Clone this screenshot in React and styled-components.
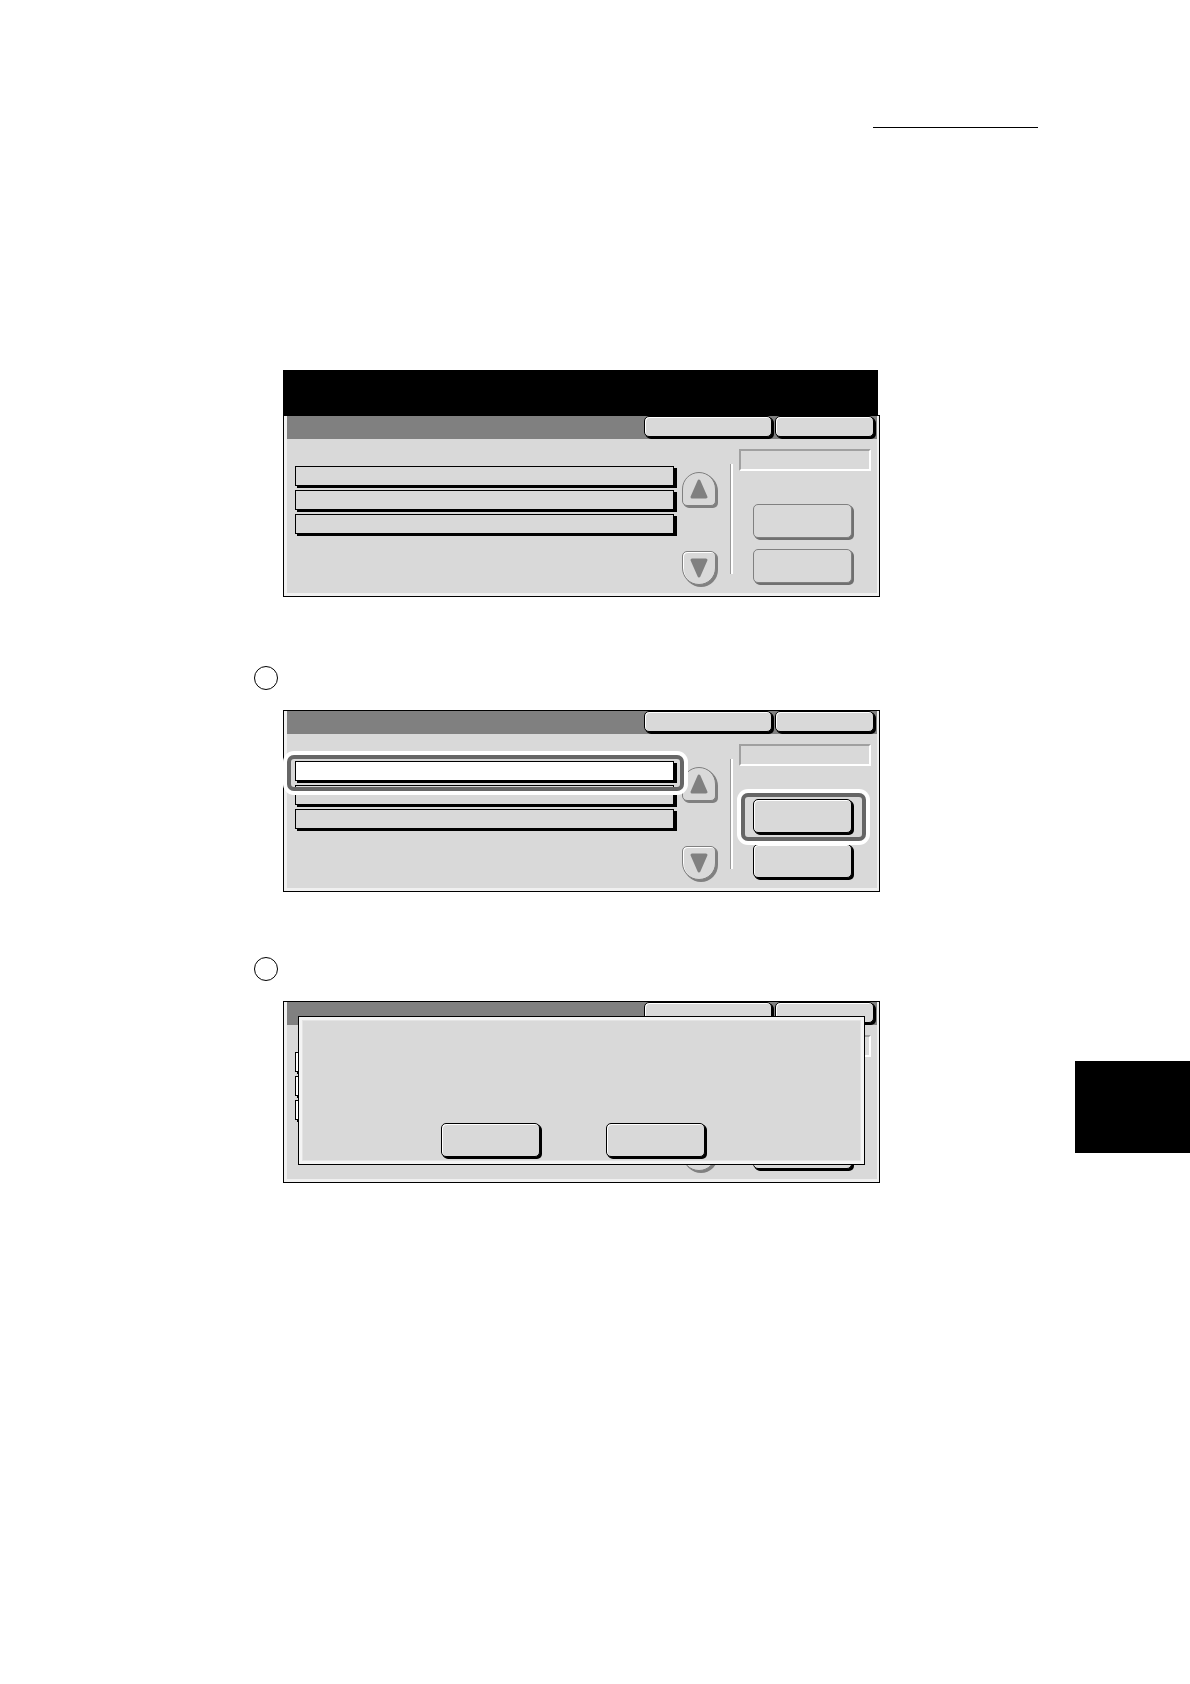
import React from "react";
import styled, { createGlobalStyle } from "styled-components";

const GlobalStyle = createGlobalStyle`
  * {
    box-sizing: border-box;
  }
  body {
    margin: 0;
    background-color: white;
    font-family: "Liberation Sans", sans-serif;
  }
`;

const Page = styled.div`
  display: flex;
  min-height: 100vh;
`;
const Main = styled.main`
  flex: 1;
  min-width: 0;
  padding: 127px 37px 0 254px;
`;
const Side = styled.aside`
  width: 115px;
  padding-top: 1061px;
`;
const ThumbIndex = styled.div`
  height: 92px;
  background-color: black;
`;
const HeaderRule = styled.hr`
  width: 165px;
  height: 1px;
  margin: 0 0 242px auto;
  border: none;
  background-color: black;
`;
const StepNumber = styled.div`
  width: 24px;
  height: 24px;
  margin-top: ${(props) => props.$top}px;
  margin-bottom: 20px;
  border: 1px solid black;
  border-radius: 50%;
`;
const Figure = styled.section`
  margin: 0 158px 0 29px;
`;
const MessageArea = styled.div`
  height: 45px;
  margin-right: 2px;
  background-color: black;
`;

const Screen = styled.div`
  position: relative;
  padding: 0 2px 3px 3px;
  border: 1px solid black;
  background-color: #f0f0f0;
`;
const TitleBar = styled.div`
  display: flex;
  justify-content: flex-end;
  gap: 3px;
  height: 23px;
  padding-right: 3px;
  background-color: #808080;
`;
const Body = styled.div`
  display: flex;
  align-items: flex-start;
  min-height: 154px;
  padding: 0 6px 0 8px;
  background-color: #d9d9d9;
`;

const Button = styled.button`
  display: block;
  padding: 0;
  border: 1px solid black;
  border-radius: 5px;
  background-color: #d9d9d9;
  box-shadow: inset 1px 1px 0 white, 1px 1px 0 black, 2px 2px 0 black;
  &:disabled {
    border-color: #808080;
    box-shadow: 1px 1px 0 #707070, 2px 2px 0 #707070;
  }
`;
const TabButton = styled(Button)`
  width: ${(props) => (props.$wide ? 128 : 99)}px;
  height: 21px;
`;
const ActionButton = styled(Button)`
  width: 99px;
  height: 34px;
`;
const ArrowButton = styled(Button)`
  display: flex;
  align-items: center;
  justify-content: center;
  width: 34px;
  height: 34px;
  border-radius: ${(props) => (props.$up ? "17px 17px 5px 5px" : "5px 5px 17px 17px")};
  &:disabled {
    box-shadow: ${(props) => (props.$up ? "" : "inset 1px 1px 0 white,")} 1px 1px 0 #808080,
      2px 2px 0 #808080;
  }
`;

const List = styled.ul`
  display: flex;
  flex: 1;
  flex-direction: column;
  gap: 4px;
  margin: 0;
  padding: 27px 0 0;
  list-style: none;
`;
const Item = styled.li`
  position: relative;
`;
const RowButton = styled.button`
  display: block;
  width: 100%;
  height: 20px;
  padding: 0;
  border: 1px solid black;
  background-color: ${(props) => (props.$selected ? "white" : "#d9d9d9")};
  box-shadow: 2px 2px 0 black, 3px 2px 0 black;
`;
const Arrows = styled.div`
  display: flex;
  flex-direction: column;
  gap: 45px;
  margin: 33px 14px 0 8px;
`;
const Divider = styled.div`
  width: 3px;
  height: 110px;
  margin: 25px 6px 0 0;
  border-left: 1px solid #999999;
  background-color: white;
`;
const Rail = styled.div`
  display: flex;
  flex-direction: column;
  width: 132px;
  padding-top: 10px;
`;
const Field = styled.input`
  width: 100%;
  height: 22px;
  margin: 0 0 33px;
  padding: 0;
  border: 2px solid;
  border-color: #a0a0a0 white white #a0a0a0;
  border-radius: 0;
  background-color: #d9d9d9;
`;
const Actions = styled.div`
  display: flex;
  flex-direction: column;
  gap: 11px;
  padding-left: 14px;
`;
const Action = styled.div`
  position: relative;
  width: 99px;
`;

/* ring drawn round the control to press, over its neighbours */
const Ring = styled.span`
  position: absolute;
  z-index: 1;
  inset: ${(props) => props.$inset};
  border: 4px solid #666666;
  border-radius: 7px;
  box-shadow: 0 0 0 4px white;
  pointer-events: none;
`;

const Dialog = styled.div`
  position: absolute;
  z-index: 2;
  inset: 14px 14px 17px 14px;
  display: flex;
  align-items: flex-end;
  justify-content: center;
  gap: 66px;
  padding: 0 18px 7px 0;
  border: 1px solid black;
  background-color: #d9d9d9;
  box-shadow: inset 0 0 0 3px #f4f4f4, inset 0 0 0 4px #e4e4e4;
`;

const Arrow = ({ up }) => (
  <svg width="18" height="20" viewBox="0 0 18 20" aria-hidden="true">
    <path
      d={up ? "M9 2L16 18H2Z" : "M9 18L16 2H2Z"}
      fill="#808080"
      stroke="#808080"
      strokeWidth="3"
      strokeLinejoin="round"
    />
  </svg>
);

const rows = [1, 2, 3];

const ControlScreen = ({ enabled, selected = [], marked, children }) => (
  <Screen>
    <TitleBar>
      <TabButton $wide aria-label="Cancel" />
      <TabButton aria-label="Close" />
    </TitleBar>
    <Body>
      <List>
        {rows.map((row) => (
          <Item key={row}>
            <RowButton $selected={selected.includes(row)} aria-label={`Item ${row}`} />
            {marked && row === 1 && <Ring $inset="-6px -10px -10px -8px" />}
          </Item>
        ))}
      </List>
      <Arrows>
        <ArrowButton $up disabled aria-label="Previous">
          <Arrow up />
        </ArrowButton>
        <ArrowButton disabled aria-label="Next">
          <Arrow />
        </ArrowButton>
      </Arrows>
      <Divider />
      <Rail>
        <Field readOnly aria-label="Selected item" />
        <Actions>
          <Action>
            <ActionButton disabled={!enabled} aria-label="Settings" />
            {marked && <Ring $inset="-6px -14px -8px -12px" />}
          </Action>
          <Action>
            <ActionButton disabled={!enabled} aria-label="Delete" />
          </Action>
        </Actions>
      </Rail>
    </Body>
    {children}
  </Screen>
);

const App = () => {
  return (
    <>
      <GlobalStyle />
      <Page>
        <Main>
          <HeaderRule />
          <Figure>
            <MessageArea />
            <ControlScreen />
          </Figure>
          <StepNumber $top={69} />
          <Figure>
            <ControlScreen enabled marked selected={[1]} />
          </Figure>
          <StepNumber $top={65} />
          <Figure>
            <ControlScreen enabled selected={rows}>
              <Dialog role="dialog" aria-label="Confirm">
                <ActionButton aria-label="Yes" />
                <ActionButton aria-label="No" />
              </Dialog>
            </ControlScreen>
          </Figure>
        </Main>
        <Side>
          <ThumbIndex />
        </Side>
      </Page>
    </>
  );
};
export default App;
